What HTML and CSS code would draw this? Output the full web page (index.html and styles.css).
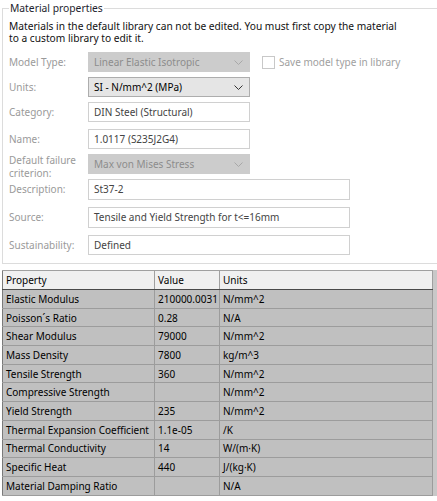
FILE: index.html
```html
<!DOCTYPE html>
<html>
<head>
<meta charset="utf-8">
<link rel="stylesheet" href="styles.css">
</head>
<body>
<fieldset class="group">
  <legend class="legend">Material properties</legend>
  <p class="note">Materials in the default library can not be edited. You must first copy the material to a custom library to edit it.</p>
  <div class="form">
    <div class="row">
      <span class="label">Model Type:</span>
      <div class="select disabled short"><span>Linear Elastic Isotropic</span><svg class="chev" width="9" height="5" viewBox="0 0 9 5"><path d="M0.5 0.5 L4.5 4.5 L8.5 0.5" fill="none" stroke="currentColor" stroke-width="1"/></svg></div>
      <label class="check"><span class="box"></span><span>Save model type in library</span></label>
    </div>
    <div class="row">
      <span class="label">Units:</span>
      <div class="select active short"><span>SI - N/mm^2 (MPa)</span><svg class="chev" width="9" height="5" viewBox="0 0 9 5"><path d="M0.5 0.5 L4.5 4.5 L8.5 0.5" fill="none" stroke="currentColor" stroke-width="1"/></svg></div>
    </div>
    <div class="row">
      <span class="label">Category:</span>
      <div class="input short">DIN Steel (Structural)</div>
    </div>
    <div class="row sp">
      <span class="label">Name:</span>
      <div class="input short">1.0117 (S235J2G4)</div>
    </div>
    <div class="row">
      <span class="label two">Default failure criterion:</span>
      <div class="select disabled short"><span>Max von Mises Stress</span><svg class="chev" width="9" height="5" viewBox="0 0 9 5"><path d="M0.5 0.5 L4.5 4.5 L8.5 0.5" fill="none" stroke="currentColor" stroke-width="1"/></svg></div>
    </div>
    <div class="row tall">
      <span class="label">Description:</span>
      <div class="input long">St37-2</div>
    </div>
    <div class="row tall sp">
      <span class="label">Source:</span>
      <div class="input long">Tensile and Yield Strength for t&lt;=16mm</div>
    </div>
    <div class="row sp">
      <span class="label">Sustainability:</span>
      <div class="input long">Defined</div>
    </div>
  </div>
</fieldset>
<div class="grid-wrap">
<table class="props">
  <thead>
    <tr><th class="c1">Property</th><th class="c2">Value</th><th class="c3">Units</th></tr>
  </thead>
  <tbody>
    <tr><td>Elastic Modulus</td><td>210000.0031</td><td>N/mm^2</td></tr>
    <tr><td>Poisson´s Ratio</td><td>0.28</td><td>N/A</td></tr>
    <tr><td>Shear Modulus</td><td>79000</td><td>N/mm^2</td></tr>
    <tr><td>Mass Density</td><td>7800</td><td>kg/m^3</td></tr>
    <tr><td>Tensile Strength</td><td>360</td><td>N/mm^2</td></tr>
    <tr><td>Compressive Strength</td><td></td><td>N/mm^2</td></tr>
    <tr><td>Yield Strength</td><td>235</td><td>N/mm^2</td></tr>
    <tr><td>Thermal Expansion Coefficient</td><td>1.1e-05</td><td>/K</td></tr>
    <tr><td>Thermal Conductivity</td><td>14</td><td>W/(m·K)</td></tr>
    <tr><td>Specific Heat</td><td>440</td><td>J/(kg·K)</td></tr>
    <tr><td>Material Damping Ratio</td><td></td><td>N/A</td></tr>
  </tbody>
</table>
</div>
</body>
</html>
```
FILE: styles.css
```css
html, body {
  margin: 0;
  padding: 0;
  background: #ffffff;
  overflow: hidden;
}
body {
  font-family: "Noto Sans", "Open Sans", sans-serif;
  font-size: 10px;
  color: #1a1a1a;
  width: 437px;
  height: 501px;
}
.group {
  margin: 2px -20px 0 2px;
  padding: 0 0 8px 6px;
  border: 1px solid #dcdcdc;
  border-right: none;
  height: 262px;
  box-sizing: border-box;
  min-width: 0;
}
.legend {
  padding: 0 1px;
  margin-left: 0;
  font-size: 10.3px;
  line-height: 12px;
  color: #1e1e2e;
}
.note {
  margin: 6px 0 0 0;
  line-height: 12px;
  font-size: 10.2px;
  color: #111;
  width: 400px;
}
.form {
  margin-top: 8px;
  display: flex;
  flex-direction: column;
  gap: 5px;
}
.row {
  display: flex;
  align-items: center;
  height: 20px;
}
.row.tall { height: 21px; }
.row.sp { margin-top: 2px; }
.label {
  width: 79px;
  flex: none;
  color: #9a9a9a;
  line-height: 13px;
}
.label.two {
  align-self: flex-start;
  margin-top: 0;
}
.select, .input {
  box-sizing: border-box;
  height: 100%;
  display: flex;
  align-items: center;
  padding: 0 6px 0 5px;
  white-space: nowrap;
  overflow: hidden;
}
.short { width: 162px; }
.long { width: 262px; }
.select {
  justify-content: space-between;
}
.select.disabled {
  background: #cccccc;
  border: 1px solid #cccccc;
  color: #8c8c8c;
}
.select.disabled .chev { color: #a8a8a8; }
.select.active {
  background: #e5e5e5;
  border: 1px solid #adadad;
  color: #000;
}
.select.active .chev { color: #333; }
.input {
  background: #fff;
  border: 1px solid #d0d0d0;
  color: #444;
  align-items: flex-start;
  padding-top: 2px;
}
.check {
  display: flex;
  align-items: center;
  margin-left: 12px;
  color: #a0a0a0;
  gap: 4px;
}
.check .box {
  width: 11px;
  height: 11px;
  border: 1px solid #c8c8c8;
  background: #fff;
}
.grid-wrap {
  margin: 6px 0 0 2px;
  width: 435px;
  background: #c8c8c8;
}
.props {
  border-collapse: collapse;
  width: 431px;
  table-layout: fixed;
  border-left: 1px solid #7a7a7a;
  border-right: 1px solid #6a6a6a;
  border-top: 1px solid #a0a0a0;
}
.props th, .props td {
  padding: 0 0 0 3px;
  text-align: left;
  font-weight: normal;
  white-space: nowrap;
  overflow: hidden;
  color: #000;
  line-height: 14px;
}
.props th {
  background: #f0f0f0;
  height: 18px;
  border-right: 1px solid #a0a0a0;
  border-bottom: 1px solid #4a4a4a;
}
.props td {
  background: #c0c0c0;
  height: 17.7px;
  border-right: 1px solid #9c9c9c;
  border-bottom: 1px solid #9c9c9c;
}
.c1 { width: 148px; }
.c2 { width: 61px; }
.c3 { width: auto; }
```
